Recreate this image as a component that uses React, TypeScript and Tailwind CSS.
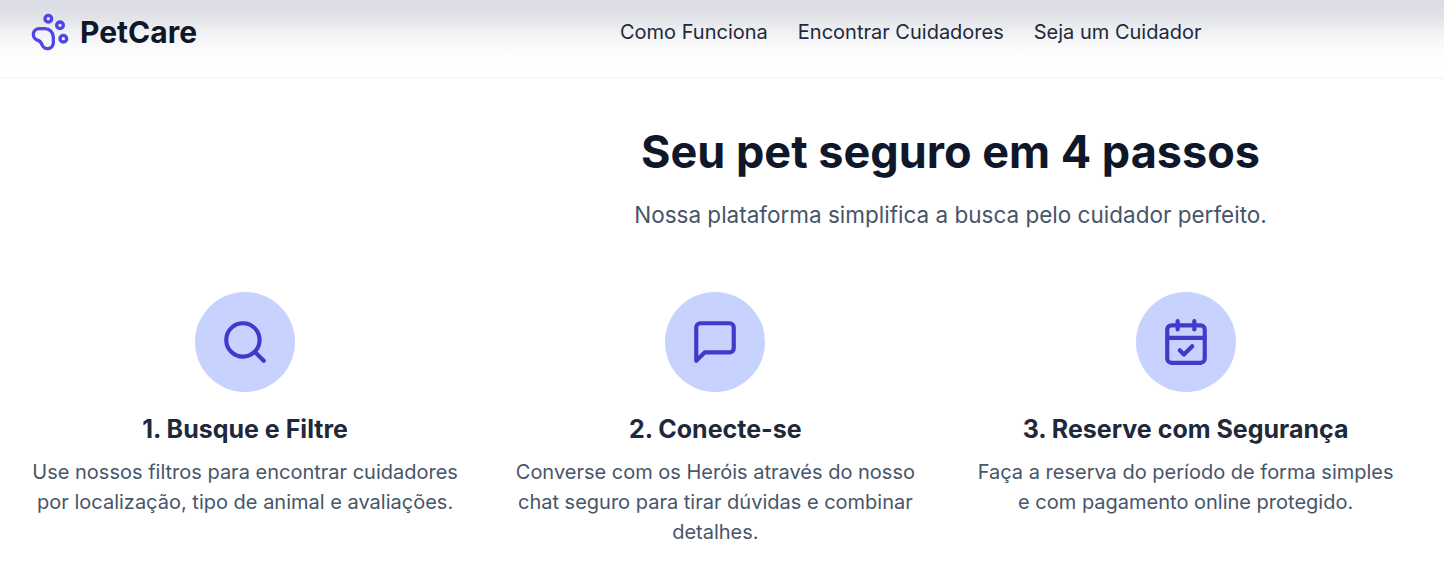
import type { SVGProps } from 'react';
import { Search, CalendarCheck, PawPrint } from 'lucide-react';

function MessageIcon(props: SVGProps<SVGSVGElement>) {
  return (
    <svg viewBox="0 0 24 24" fill="none" stroke="currentColor" strokeWidth="2" strokeLinecap="round" strokeLinejoin="round" {...props}>
      <path d="M21 15a2 2 0 0 1-2 2H7l-4 4V5a2 2 0 0 1 2-2h14a2 2 0 0 1 2 2z" />
    </svg>
  );
}

const steps = [
  { icon: Search, title: '1. Busque e Filtre', text: 'Use nossos filtros para encontrar cuidadores por localização, tipo de animal e avaliações.' },
  { icon: MessageIcon, title: '2. Conecte-se', text: 'Converse com os Heróis através do nosso chat seguro para tirar dúvidas e combinar detalhes.' },
  { icon: CalendarCheck, title: '3. Reserve com Segurança', text: 'Faça a reserva do período de forma simples e com pagamento online protegido.' },
];

export default function App() {
  return (
    <div className="h-[572px] overflow-hidden bg-white font-['Inter',sans-serif]">
      <header className="h-[79px] border-b-2 border-[#f8f8f8] bg-[linear-gradient(to_bottom,#dbdbe6_0px,#dddee5_8px,#e4e5e9_20px,#f0f1f3_32px,#f9f9fa_44px,#fefefe_58px,#ffffff_70px)]">
        <div className="flex h-[64px] items-center pl-[30px]">
          <div className="flex w-[590px] items-center gap-[10px]">
            <PawPrint className="size-[40px] text-[#4f46e5]" />
            <span className="text-[30px] font-bold leading-[40px] text-[#0f172a]">PetCare</span>
          </div>
          <nav className="flex gap-[30px] text-[20px] leading-[30px] text-[#1e293b]">
            <a>Como Funciona</a>
            <a>Encontrar Cuidadores</a>
            <a>Seja um Cuidador</a>
          </nav>
        </div>
      </header>
      <main>
        <div className="ml-[480px] mt-[48px] w-[941px] text-center">
          <h2 className="text-[45px] font-bold leading-[50px] text-[#0f172a]">Seu pet seguro em 4 passos</h2>
          <p className="mt-[20px] text-[22.5px] leading-[35px] text-[#475569]">Nossa plataforma simplifica a busca pelo cuidador perfeito.</p>
        </div>
        <div className="ml-[30px] mt-[60px] grid w-[1370.75px] grid-cols-3 gap-[40px]">
          {steps.map(({ icon: Icon, title, text }) => (
            <div key={title} className="flex flex-col items-center text-center">
              <div className="flex size-[100px] items-center justify-center rounded-full bg-[#c7d2fe]">
                <Icon className="size-[50px] text-[#4338ca]" />
              </div>
              <h3 className="mt-[20px] text-[25px] font-bold leading-[35px] text-[#1e293b]">{title}</h3>
              <p className="mt-[10px] text-[20px] leading-[30px] text-[#475569]">{text}</p>
            </div>
          ))}
        </div>
      </main>
    </div>
  );
}
